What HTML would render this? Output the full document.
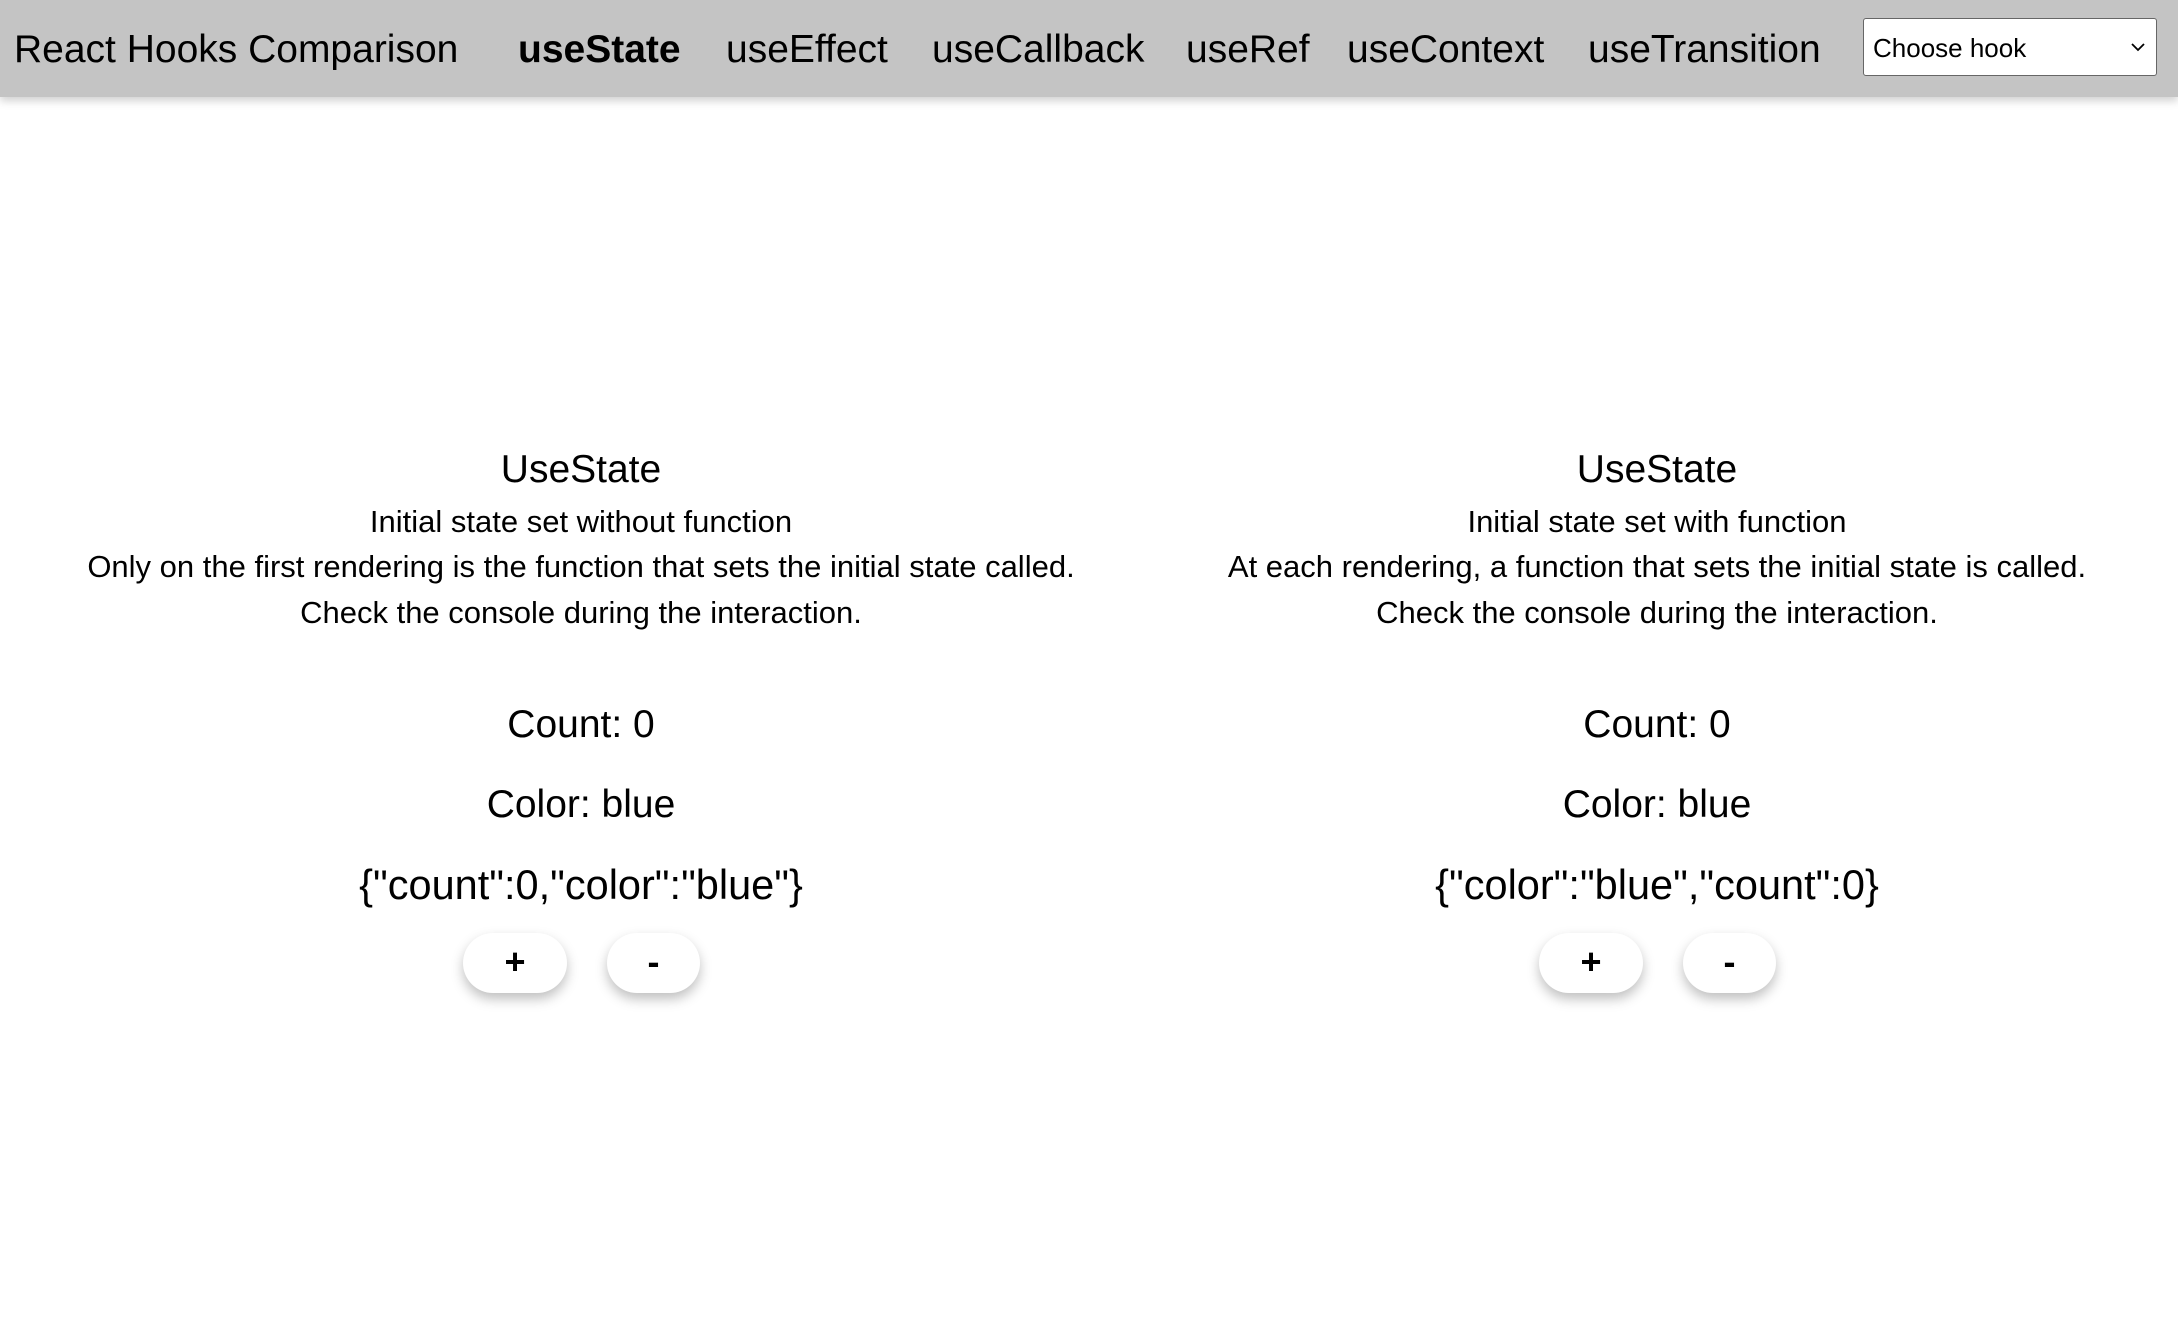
<!DOCTYPE html>
<html><head><meta charset="utf-8"><style>
*{margin:0;padding:0;box-sizing:border-box}
body{width:2178px;height:1330px;background:#fff;font-family:"Liberation Sans",sans-serif;color:#000;position:relative;overflow:hidden}
.hdr{position:absolute;left:0;top:0;width:2178px;height:97px;background:#c4c4c4;box-shadow:0 4px 8px rgba(0,0,0,.18)}
.t{position:absolute;white-space:nowrap;line-height:1}
.nav{font-size:39px;top:30px}
.sel{position:absolute;left:1863px;top:18px;width:294px;height:58px;background:#fff;border:1.5px solid #666;border-radius:3px;font-size:26px;padding:14px 9px}
.sel svg{position:absolute;right:10px;top:23px}
.col{position:absolute;top:0;width:1100px;text-align:center}
.col div{position:absolute;left:0;width:100%;white-space:nowrap;line-height:1}
.h{font-size:39px}
.d{font-size:31px}
.b{font-size:39px}
.j{font-size:41.5px}
.btn{position:absolute;top:933px;height:60px;background:#fff;border-radius:30px;box-shadow:0 6px 12px rgba(0,0,0,.25);font-size:36px;font-weight:bold;text-align:center;line-height:58px}
</style></head><body>
<div class="hdr"></div>
<div class="t nav" style="left:14px">React Hooks Comparison</div>
<div class="t nav" style="left:518px;font-weight:bold">useState</div>
<div class="t nav" style="left:726px">useEffect</div>
<div class="t nav" style="left:932px">useCallback</div>
<div class="t nav" style="left:1186px">useRef</div>
<div class="t nav" style="left:1347px">useContext</div>
<div class="t nav" style="left:1588px">useTransition</div>
<div class="sel">Choose hook<svg width="16" height="10" viewBox="0 0 16 10"><path d="M2 2l6 6 6-6" fill="none" stroke="#000" stroke-width="1.8"/></svg></div>

<div class="col" style="left:31px">
<div class="h" style="top:450px">UseState</div>
<div class="d" style="top:506px">Initial state set without function</div>
<div class="d" style="top:551px">Only on the first rendering is the function that sets the initial state called.</div>
<div class="d" style="top:597px">Check the console during the interaction.</div>
<div class="b" style="top:705px">Count: 0</div>
<div class="b" style="top:785px">Color: blue</div>
<div class="j" style="top:864px">{"count":0,"color":"blue"}</div>
</div>
<div class="btn" style="left:463px;width:104px">+</div>
<div class="btn" style="left:607px;width:93px">-</div>

<div class="col" style="left:1107px">
<div class="h" style="top:450px">UseState</div>
<div class="d" style="top:506px">Initial state set with function</div>
<div class="d" style="top:551px">At each rendering, a function that sets the initial state is called.</div>
<div class="d" style="top:597px">Check the console during the interaction.</div>
<div class="b" style="top:705px">Count: 0</div>
<div class="b" style="top:785px">Color: blue</div>
<div class="j" style="top:864px">{"color":"blue","count":0}</div>
</div>
<div class="btn" style="left:1539px;width:104px">+</div>
<div class="btn" style="left:1683px;width:93px">-</div>
</body></html>
